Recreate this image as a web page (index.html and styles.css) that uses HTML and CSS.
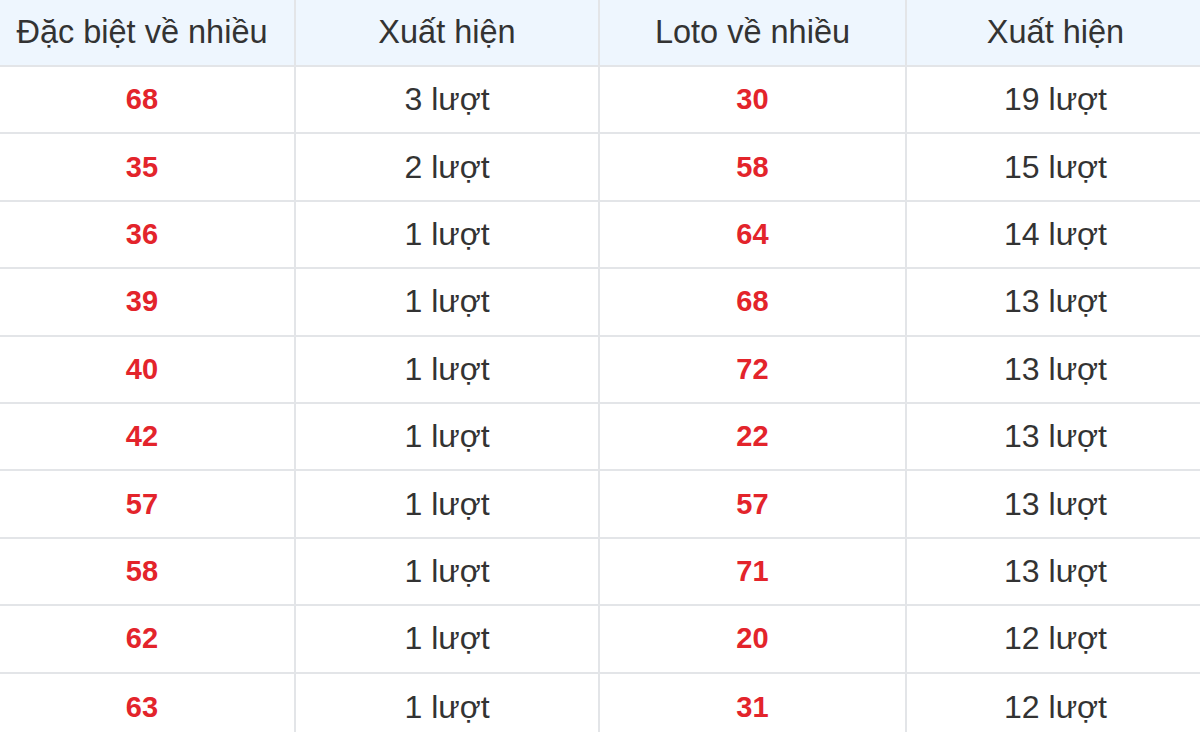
FILE: index.html
```html
<!DOCTYPE html>
<html lang="vi">
<head>
<meta charset="utf-8">
<title>Thống kê</title>
<link rel="stylesheet" href="styles.css">
</head>
<body>
<div class="wrap">
  <div class="row head">
    <div class="cell">Đặc biệt về nhiều</div>
    <div class="cell">Xuất hiện</div>
    <div class="cell">Loto về nhiều</div>
    <div class="cell">Xuất hiện</div>
  </div>
  <div class="row"><div class="cell num">68</div><div class="cell">3 lượt</div><div class="cell num">30</div><div class="cell">19 lượt</div></div>
  <div class="row"><div class="cell num">35</div><div class="cell">2 lượt</div><div class="cell num">58</div><div class="cell">15 lượt</div></div>
  <div class="row"><div class="cell num">36</div><div class="cell">1 lượt</div><div class="cell num">64</div><div class="cell">14 lượt</div></div>
  <div class="row"><div class="cell num">39</div><div class="cell">1 lượt</div><div class="cell num">68</div><div class="cell">13 lượt</div></div>
  <div class="row"><div class="cell num">40</div><div class="cell">1 lượt</div><div class="cell num">72</div><div class="cell">13 lượt</div></div>
  <div class="row"><div class="cell num">42</div><div class="cell">1 lượt</div><div class="cell num">22</div><div class="cell">13 lượt</div></div>
  <div class="row"><div class="cell num">57</div><div class="cell">1 lượt</div><div class="cell num">57</div><div class="cell">13 lượt</div></div>
  <div class="row"><div class="cell num">58</div><div class="cell">1 lượt</div><div class="cell num">71</div><div class="cell">13 lượt</div></div>
  <div class="row"><div class="cell num">62</div><div class="cell">1 lượt</div><div class="cell num">20</div><div class="cell">12 lượt</div></div>
  <div class="row last"><div class="cell num">63</div><div class="cell">1 lượt</div><div class="cell num">31</div><div class="cell">12 lượt</div></div>
</div>
</body>
</html>
```
FILE: styles.css
```css
html, body {
  margin: 0;
  padding: 0;
  background: #fff;
  overflow: hidden;
}
body {
  font-family: "Liberation Sans", Arial, sans-serif;
  color: #333;
  width: 1200px;
  height: 752px;
}
.wrap {
  width: 1216px;
  height: 732px;
  margin-left: -10px;
  overflow: hidden;
}
.row {
  display: grid;
  grid-template-columns: 306px 304px 307px 299px;
  height: 67.4px;
  box-sizing: border-box;
  border-bottom: 2px solid #e3e5e8;
}
.row.head {
  height: 67px;
  background: #eef6fe;
}
.row.last {
  border-bottom: none;
}
.cell {
  display: flex;
  align-items: center;
  justify-content: center;
  border-right: 2px solid #e3e5e8;
  font-size: 32px;
  white-space: nowrap;
}
.head .cell {
  font-size: 32.5px;
}
.num {
  color: #e3242b;
  font-weight: bold;
  font-size: 29px;
}
```
